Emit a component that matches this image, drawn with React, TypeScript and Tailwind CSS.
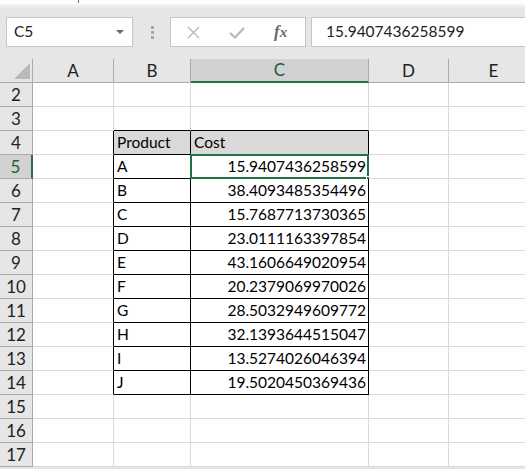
import React from "react";

const COLS = [
  { key: "A", w: 81 },
  { key: "B", w: 77 },
  { key: "C", w: 178 },
  { key: "D", w: 80 },
  { key: "E", w: 90 },
];

const DATA: Record<number, [string, string]> = {
  4: ["Product", "Cost"],
  5: ["A", "15.9407436258599"],
  6: ["B", "38.4093485354496"],
  7: ["C", "15.7687713730365"],
  8: ["D", "23.0111163397854"],
  9: ["E", "43.1606649020954"],
  10: ["F", "20.2379069970026"],
  11: ["G", "28.5032949609772"],
  12: ["H", "32.1393644515047"],
  13: ["I", "13.5274026046394"],
  14: ["J", "19.5020450369436"],
};

const ROWS = Array.from({ length: 16 }, (_, i) => i + 2);
const FONT = { fontFamily: "Lato, 'Liberation Sans', sans-serif" };

function Cell({ row, col, w }: { row: number; col: string; w: number }) {
  const inTable = row >= 4 && row <= 14;
  const blackRight = inTable && (col === "A" || col === "B" || col === "C");
  const blackBottom = row >= 3 && row <= 14 && (col === "B" || col === "C");
  const header = row === 4 && (col === "B" || col === "C");
  const selected = row === 5 && col === "C";
  let text = "";
  if (DATA[row] && col === "B") text = DATA[row][0];
  if (DATA[row] && col === "C") text = DATA[row][1];
  const numeric = col === "C" && row > 4;

  return (
    <div
      className={`relative box-border flex h-[24px] shrink-0 items-end border-r border-b pb-[3px] text-[15.5px] leading-[18px] text-black ${
        numeric ? "justify-end pr-[2px]" : "pl-[3px]"
      } ${header ? "bg-[#d9d9d9]" : "bg-white"} ${blackRight ? "border-r-black" : "border-r-[#d9d9d9]"} ${
        blackBottom ? "border-b-black" : "border-b-[#d9d9d9]"
      }`}
      style={{ width: w }}
    >
      {text}
      {selected && (
        <>
          <div className="pointer-events-none absolute -top-[1px] -left-[1px] -right-[1px] -bottom-[1px] border-2 border-[#217346]" />
          <div className="absolute -right-[4px] -bottom-[4px] h-[6px] w-[6px] border border-white bg-[#217346]" />
        </>
      )}
    </div>
  );
}

export default function App() {
  return (
    <div className="h-[469px] w-[525px] overflow-hidden bg-[#e6e6e6]" style={FONT}>
      {/* window top edge */}
      <div className="relative h-[4px] bg-white">
        <div className="absolute left-[78px] top-0 h-[3px] w-[1px] bg-[#666]" />
      </div>
      <div className="h-[5px] bg-gradient-to-b from-[#f4f4f4] to-[#e6e6e6]" />

      {/* formula bar */}
      <div className="flex h-[50px] items-start pt-[8px]">
        <div className="ml-[6px] box-border flex h-[30px] w-[127px] items-center justify-between border border-[#c6c6c6] bg-white pl-[7px] pr-[8px]">
          <span className="text-[15.5px] text-[#222]">C5</span>
          <span className="h-0 w-0 border-x-[4px] border-t-[4px] border-x-transparent border-t-[#666]" />
        </div>
        <div className="ml-[18px] flex h-[30px] flex-col justify-center gap-[2px]">
          <span className="h-[3px] w-[3px] bg-[#a6a6a6]" />
          <span className="h-[3px] w-[3px] bg-[#a6a6a6]" />
          <span className="h-[3px] w-[3px] bg-[#a6a6a6]" />
        </div>
        <div className="ml-[16px] box-border flex h-[30px] w-[136px] items-center border border-[#c6c6c6] bg-white">
          <svg className="ml-[16px]" width="13" height="13" viewBox="0 0 13 13">
            <path d="M1 1 L12 12 M12 1 L1 12" stroke="#b8b8b8" strokeWidth="1.4" fill="none" />
          </svg>
          <svg className="ml-[29px]" width="16" height="13" viewBox="0 0 16 13">
            <path d="M1 7 L6 11.5 L15 2" stroke="#b8b8b8" strokeWidth="2.2" fill="none" />
          </svg>
          <span
            className="ml-[29px] text-[17px] italic font-bold text-[#6a6a6a]"
            style={{ fontFamily: "'Liberation Serif', 'DejaVu Serif', serif" }}
          >
            f<span className="text-[15px]">x</span>
          </span>
        </div>
        <div className="ml-[5px] box-border flex h-[30px] flex-1 items-center border border-r-0 border-[#c6c6c6] bg-white pl-[14px]">
          <span className="text-[15.5px] text-[#222]">15.9407436258599</span>
        </div>
      </div>

      {/* column headers */}
      <div className="flex h-[24px]">
        <div className="relative box-border h-[24px] w-[33px] shrink-0 border-r border-b border-[#ababab] bg-[#e6e6e6]">
          <svg className="absolute right-[2px] bottom-[3px]" width="16" height="16" viewBox="0 0 16 16">
            <path d="M16 0 L16 16 L0 16 Z" fill="#b9b9b9" />
          </svg>
        </div>
        {COLS.map((c) => {
          const sel = c.key === "C";
          return (
            <div
              key={c.key}
              className={`box-border flex h-[24px] shrink-0 items-center justify-center border-r text-[17px] ${
                sel
                  ? "border-b-2 border-b-[#217346] border-r-[#ababab] bg-[#d2d2d2] text-[#1e5e3c]"
                  : "border-b border-[#ababab] bg-[#e6e6e6] text-[#222]"
              }`}
              style={{ width: c.w }}
            >
              {c.key}
            </div>
          );
        })}
      </div>

      {/* rows */}
      {ROWS.map((r) => {
        const sel = r === 5;
        return (
          <div key={r} className="flex h-[24px]">
            <div
              className={`box-border flex h-[24px] w-[33px] shrink-0 items-center justify-center border-b text-[17px] ${
                sel
                  ? "border-r-2 border-r-[#217346] border-b-[#ababab] bg-[#d2d2d2] text-[#1e5e3c]"
                  : "border-r border-[#ababab] bg-[#e6e6e6] text-[#222]"
              }`}
            >
              {r}
            </div>
            {COLS.map((c) => (
              <Cell key={c.key} row={r} col={c.key} w={c.w} />
            ))}
          </div>
        );
      })}
    </div>
  );
}
